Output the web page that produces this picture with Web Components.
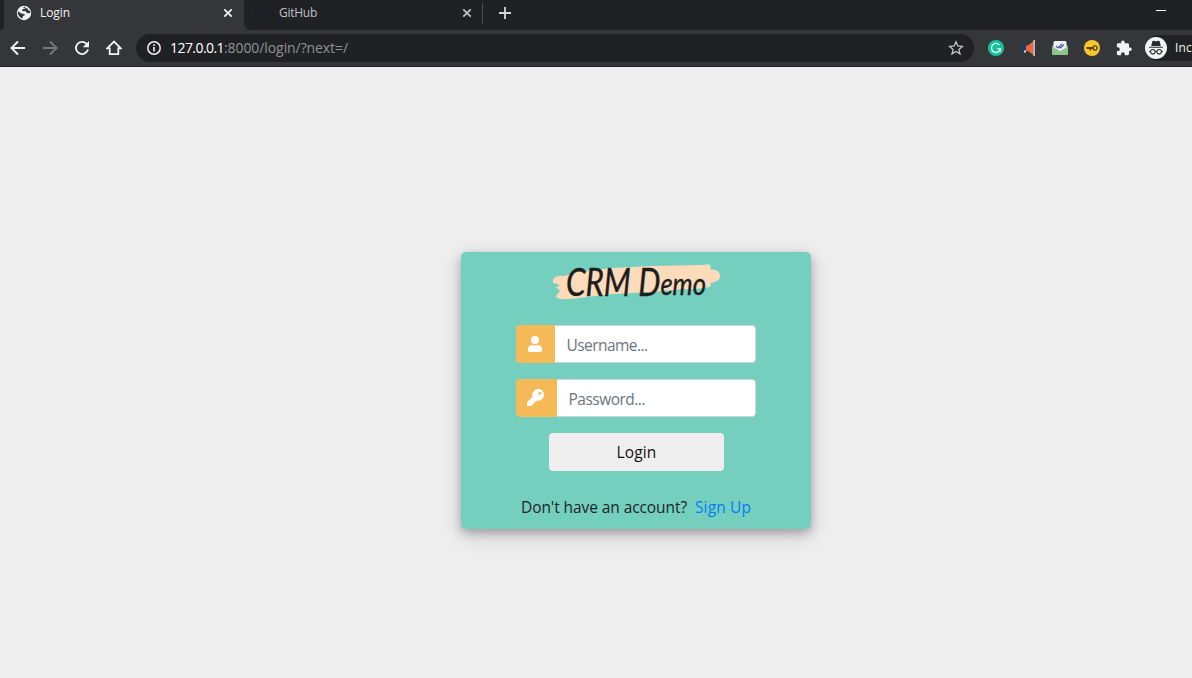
<!DOCTYPE html>
<html lang="en">
<head>
<meta charset="utf-8">
<title>Login</title>
<style>
html,body{margin:0;height:100%;overflow:hidden;background:#eee;font-family:"Open Sans","Noto Sans",sans-serif}
</style>
</head>
<body>
<login-app></login-app>
<script>
const define = (name, html) => customElements.define(name, class extends HTMLElement {
  constructor(){ super(); this.attachShadow({mode:'open'}).innerHTML = html; }
});

/* Text run spaced to an exact width. */
customElements.define('fit-text', class extends HTMLElement {
  constructor(){ super(); this.attachShadow({mode:'open'}).innerHTML =
    '<style>:host{display:inline-block;white-space:pre;line-height:1}span{display:inline-block}</style><span><slot></slot></span>'; }
  connectedCallback(){
    const s = this.shadowRoot.querySelector('span'), w = +this.getAttribute('w');
    s.style.letterSpacing = (w - s.getBoundingClientRect().width) / this.textContent.length + 'px';
  }
});

const icons = {
  globe:'<circle cx="8" cy="8" r="7.2" fill="#f1f3f4"/><path d="M2.2 6.2L5.2 8.6 8.4 9 8.8 10.3 7 11 6.4 13.6 4 12.2 1.8 9zM6.7 2.4L9.4 1.6 9 3.5 6.4 4.3 6.2 6 9.7 6.2 10.8 8 14 8.3 14.2 6.3 12.3 5.3 11.3 3.3 9.5 3.3" fill="#35363a"/>',
  cat:'<path fill="#182029" d="M8 0a8 8 0 0 0-2.5 15.6c.4.1.5-.2.5-.4v-1.500c-2.200.500-2.700-1-2.700-1-.400-.900-.900-1.200-.900-1.200-.700-.500.100-.500.100-.500.800.100 1.200.900 1.200.900.700 1.200 1.900.900 2.300.700.100-.600.300-.900.500-1.100-1.800-.200-3.600-.900-3.600-4 0-.900.300-1.600.800-2.100-.100-.200-.400-1 .100-2.100 0 0 .700-.200 2.200.800a7.500 7.500 0 0 1 4 0c1.500-1 2.200-.8 2.200-.8.400 1.100.200 1.900.100 2.100.500.500.800 1.200.800 2.100 0 3.100-1.900 3.800-3.600 4 .300.300.500.800.500 1.500v2.200c0 .200.100.500.600.400A8 8 0 0 0 8 0z"/>',
  close:'<path d="M4.300 4.300l7.400 7.400m0-7.400l-7.400 7.400" fill="none" stroke="currentColor" stroke-width="1.700"/>',
  plus:'<path d="M8 2v12M2 8h12" stroke="currentColor" stroke-width="1.800"/>',
  back:'<path d="M15 8H2M8 1.500L1.500 8 8 14.500" fill="none" stroke="currentColor" stroke-width="1.900"/>',
  forward:'<path d="M1 8h13M8 1.500L14.500 8 8 14.500" fill="none" stroke="currentColor" stroke-width="1.900"/>',
  reload:'<path d="M12.700 4A6.100 6.100 0 1 0 14 9.400" fill="none" stroke="currentColor" stroke-width="1.900"/><path d="M15 1v6.200H8.800z" fill="currentColor"/>',
  home:'<path d="M1.200 8.400L8 1.600l6.800 6.800h-2.500v5.800H3.700V8.400z" fill="none" stroke="currentColor" stroke-width="1.800"/>',
  info:'<circle cx="8" cy="8" r="6.200" fill="none" stroke="currentColor" stroke-width="1.500"/><path d="M8 7v4.400M8 4.300v1.700" stroke="currentColor" stroke-width="1.600"/>',
  star:'<path d="M8 1.800l1.800 4.200 4.600.4-3.500 3 1.100 4.500L8 11.500l-4 2.400 1.100-4.500-3.500-3 4.600-.4z" fill="none" stroke="currentColor" stroke-width="1.300"/>',
  grammar:'<circle cx="8" cy="8" r="8" fill="#15c39a"/><path d="M11.300 4.900A4.500 4.500 0 1 0 12.400 8.600H9.300M12.400 8.600v3" fill="none" stroke="#e8fff7" stroke-width="1.400"/>',
  horn:'<path d="M0 5l7-1v8l-7-1z" fill="#263a50"/><path d="M6 5.500h2L13.500 1v14L8 11H6z" fill="#ed6844"/><path d="M4 10.500h2V12.500H4z" fill="#e8dfd7"/><path d="M13.200 0H15v16h-1.800z" fill="#bcb9b5"/>',
  mail:'<path d="M0 6l3-2h10l3 2v9H0z" fill="#69a866"/><path d="M1.500 2.500Q1.500 1 3 1h10q1.500 0 1.500 1.500V8L8 11.500 1.500 8z" fill="#eef0f7"/><path d="M0 6.500l8 5 8-5V14q0 1-1 1H1q-1 0-1-1z" fill="#8bc587"/><path d="M4 6l2 2 4-4M7.500 7l1 1L12 4.500" fill="none" stroke="#5256a5" stroke-width="1.200"/>',
  gold:'<circle cx="8" cy="8" r="8" fill="#f9c52f"/><path d="M2.500 7h7v2H7v1.500H5.500V9h-3z" fill="#5b4210"/><circle cx="11" cy="8" r="2.100" fill="none" stroke="#5b4210" stroke-width="1.300"/>',
  puzzle:'<path d="M14 7.500h-1V4.600c0-.8-.600-1.400-1.400-1.400H8.700v-1a1.800 1.800 0 0 0-3.600 0v1H2.300C1.500 3.200.9 3.800.9 4.600v2.700h1a1.900 1.900 0 0 1 0 3.800h-1v2.700c0 .8.6 1.400 1.400 1.400H5v-1a1.900 1.900 0 0 1 3.800 0v1h2.800c.8 0 1.400-.6 1.400-1.400V11h1a1.750 1.750 0 0 0 0-3.500z" fill="#f1f3f4"/>',
  spy:'<circle cx="8" cy="8" r="8" fill="#f1f3f4"/><path d="M5.300 3.200Q5.500 2.600 6 2.700l2 .4 2-.4q.5-.1.700.5L11.500 6.500h-7zM3 7h10v.9H3z" fill="#292a2d"/><g fill="none" stroke="#292a2d" stroke-width=".75"><circle cx="5.700" cy="10.800" r="1.650"/><circle cx="10.300" cy="10.800" r="1.650"/><path d="M7.300 10.600q.7-.5 1.400 0M3 10.500h1M12 10.500h1"/></g>',
  user:'<path d="M8 8a4 4 0 1 0 0-8 4 4 0 0 0 0 8zm2.800 1h-.5a5.400 5.400 0 0 1-4.600 0h-.5A4.200 4.200 0 0 0 1 13.200v1.300c0 .8.7 1.500 1.500 1.500h11c.8 0 1.500-.7 1.500-1.500v-1.300A4.200 4.200 0 0 0 10.800 9z" fill="#fff"/>',
  key:'<path fill="#fff" fill-rule="evenodd" d="M16 5.500A5.500 5.500 0 0 1 9.500 10.900L8.700 11.700q-.2.300-.6.300H7v1.200q0 .8-.8.800H5v1.200q0 .8-.8.800H.8q-.8 0-.8-.8v-2.500q0-.3.200-.5L5.300 7.200A5.500 5.500 0 1 1 16 5.500zM10.500 4a1.500 1.500 0 1 0 3 0 1.500 1.500 0 0 0-3 0z"/>'
};
customElements.define('ui-icon', class extends HTMLElement {
  constructor(){ super(); const r = this.attachShadow({mode:'open'}), z = this.getAttribute('size') || 16;
    r.innerHTML = `<style>:host{display:block;flex:none}svg{display:block}</style><svg width="${z}" height="${z}" viewBox="0 0 16 16">${icons[this.getAttribute('name')]}</svg>`; }
});

define('tab-strip', `<style>
:host{display:flex;height:30px;background:#35363a;color:#f1f3f4;font-size:12px}
.edge{width:4px;background:#202124;border-radius:0 0 4px 0}
.tab{width:240px;display:flex;align-items:flex-start;box-sizing:border-box;padding:5px 8px 0 12px}
fit-text{margin:2px 0 0 8px}.x{margin-left:auto}
.rest{flex:1;display:flex;background:#202124;border-radius:0 0 0 7px;color:#bfc2c6}
.rest .tab{width:238px;padding:5px 7px 0 11px}
.sep{width:1px;height:21px;margin-top:3px;background:#4c4e52}
.plus{margin:5px 0 0 14px;color:#d6d8dc}
.min{width:10px;height:1px;background:#fff;margin:10px 26px 0 auto}
</style><div class="edge"></div>
<div class="tab"><ui-icon name="globe"></ui-icon><fit-text w="30">Login</fit-text><ui-icon class="x" name="close"></ui-icon></div>
<div class="rest"><div class="tab"><ui-icon name="cat"></ui-icon><fit-text w="38">GitHub</fit-text><ui-icon class="x" name="close"></ui-icon></div>
<div class="sep"></div><ui-icon class="plus" name="plus" size="16"></ui-icon><div class="min"></div></div>`);

define('tool-bar', `<style>
:host{display:flex;align-items:center;height:37px;box-sizing:border-box;padding:0 0 1px 10px;background:#35363a;border-bottom:1px solid #292427;color:#f1f3f4;overflow:hidden}
.nav{display:flex;gap:16px;width:126px;flex:none}.dim{color:#77797d}
.omni{display:flex;align-items:center;width:838px;height:28px;flex:none;box-sizing:border-box;padding:0 10px;border-radius:14px;background:#202124;font-size:14px}
.url{margin-left:8px;display:flex;color:#8f9296}.host{color:#fff}
.star{margin-left:auto;color:#c3c5c9}
.ext{display:flex;gap:16px;margin-left:14px;flex:none}
.pill{display:flex;align-items:center;height:26px;width:140px;flex:none;margin-left:13px;border-radius:13px;background:#202124;font-size:12px}
.pill fit-text{margin-left:8px}
</style><div class="nav"><ui-icon name="back"></ui-icon><ui-icon class="dim" name="forward"></ui-icon><ui-icon name="reload"></ui-icon><ui-icon name="home"></ui-icon></div>
<div class="omni"><ui-icon name="info"></ui-icon><div class="url"><fit-text class="host" w="54">127.0.0.1</fit-text><fit-text w="124">:8000/login/?next=/</fit-text></div><ui-icon class="star" name="star"></ui-icon></div>
<div class="ext"><ui-icon name="grammar"></ui-icon><ui-icon name="horn"></ui-icon><ui-icon name="mail"></ui-icon><ui-icon name="gold"></ui-icon><ui-icon name="puzzle"></ui-icon></div>
<div class="pill"><ui-icon name="spy" size="22"></ui-icon><fit-text w="17">Inc</fit-text></div>`);

/* Brush stroke with slanted lettering. */
define('brand-logo', `<style>:host{display:block}svg{display:block;overflow:visible}</style>
<svg width="170" height="40" viewBox="0 0 170 40">
<path fill="#fcdbbb" d="M1 17Q3 12 12 13L25 9 60 5 100 3 150 2Q158 0 159 3L158 6Q169 7 168 13 169 18 159 20L158 24Q140 27 132 26L100 29 60 31 18 36Q4 37 4 33L8 28 4 24Q12 22 1 20z"/>
<text x="14" y="33" font-family="Lato" font-style="italic" font-size="38" fill="#1d1d1d" stroke="#1d1d1d" stroke-width=".4" textLength="140" lengthAdjust="spacingAndGlyphs">CRM D<tspan font-size="31" dy="-1">emo</tspan></text></svg>`);

define('input-group', `<style>
:host{display:flex;height:38px;width:240px;border-radius:4px;overflow:hidden;font-size:15.5px;color:#6c757d}
.icon{display:flex;align-items:center;justify-content:center;box-sizing:border-box;padding:0 1px 1px 0;width:var(--icon,38.5px);background:#f6b958}
.field{flex:1;display:flex;align-items:center;box-sizing:border-box;border:1px solid #ced4da;border-left:0;border-radius:0 4px 4px 0;background:#fff;padding:4px 0 0 12px}
</style><div class="icon"><slot name="icon"></slot></div><div class="field"><slot></slot></div>`);

define('login-card', `<style>
:host{display:flex;flex-direction:column;align-items:center;width:350px;height:277px;border-radius:5px;background:#74cfbf;box-shadow:0 4px 8px rgba(0,0,0,.2),0 6px 20px rgba(0,0,0,.19);font-size:15.5px;color:#212529}
brand-logo{margin:11px 0 0 2px}
input-group{margin-top:22px}input-group+input-group{margin-top:16px;--icon:40.5px}
button{all:unset;box-sizing:border-box;width:175px;height:38px;margin:16px 0 0 1px;border-radius:4px;background:#eee;color:#111;display:flex;align-items:center;justify-content:center;padding-top:2px}
p{margin:29px 0 0;display:flex;gap:8px;align-items:center}
a{color:#087cf4;text-decoration:none;display:flex}
</style><brand-logo></brand-logo>
<input-group><ui-icon slot="icon" name="user" size="16"></ui-icon><fit-text w="81">Username...</fit-text></input-group>
<input-group><ui-icon slot="icon" name="key" size="17"></ui-icon><fit-text w="76.500">Password...</fit-text></input-group>
<button><fit-text w="40">Login</fit-text></button>
<p><fit-text w="166">Don't have an account?</fit-text><a><fit-text w="56">Sign Up</fit-text></a></p>`);

define('login-app', `<style>
:host{display:flex;flex-direction:column;height:678px;width:1192px;overflow:hidden}
main{flex:1;display:flex;justify-content:center;align-items:flex-start;padding:185px 0 0 80px}
</style><tab-strip></tab-strip><tool-bar></tool-bar><main><login-card></login-card></main>`);
</script>
</body>
</html>
